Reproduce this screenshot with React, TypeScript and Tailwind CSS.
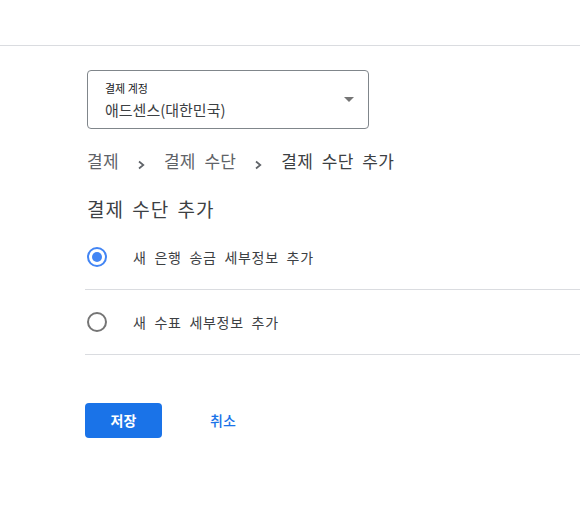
import { useState } from "react";

const font = { fontFamily: '"Noto Sans CJK KR", "Noto Sans", sans-serif' };

const Chevron = () => (
  <svg width="7" height="10" viewBox="0 0 7 10" className="ml-[19px] mr-[19px] mt-[7px]">
    <path d="M1 1.5 L5.3 5 L1 8.5" fill="none" stroke="#5f6368" strokeWidth="1.7" />
  </svg>
);

const Radio = ({ checked }: { checked: boolean }) => (
  <span
    className={
      checked
        ? "flex h-5 w-5 items-center justify-center rounded-full border-2 border-[#4285f4]"
        : "flex h-5 w-5 items-center justify-center rounded-full border-2 border-[#757575]"
    }
  >
    {checked && <span className="h-[10px] w-[10px] rounded-full bg-[#4285f4]" />}
  </span>
);

const options = ["새 은행 송금 세부정보 추가", "새 수표 세부정보 추가"];

export default function App() {
  const [selected, setSelected] = useState(0);

  return (
    <div className="min-h-[528px] bg-white text-[#3c4043]" style={font}>
      {/* top bar */}
      <div className="h-[46px] border-b border-[#dadce0]" />

      <div className="pl-[85px]">
        {/* account select */}
        <div className="ml-[2px] mt-[24px] flex h-[59px] w-[282px] items-center justify-between rounded-[4px] border border-[#80868b] pl-[17px] pr-[14px]">
          <div className="flex flex-col">
            <span className="text-[11px] leading-[14px] text-[#202124]">결제 계정</span>
            <span className="mt-[6px] text-[15px] leading-[18px] text-[#3c4043]">애드센스(대한민국)</span>
          </div>
          <svg width="10" height="5" viewBox="0 0 10 5">
            <path d="M0 0 L10 0 L5 5 Z" fill="#757575" />
          </svg>
        </div>

        {/* breadcrumb */}
        <div className="ml-[2px] mt-[20px] flex h-[24px] items-center text-[17px] tracking-[0.3px] text-[#5f6368] [word-spacing:4.5px]">
          <span>결제</span>
          <Chevron />
          <span>결제 수단</span>
          <Chevron />
          <span className="text-[#3c4043]">결제 수단 추가</span>
        </div>

        {/* heading */}
        <h1 className="ml-[2px] mt-[24px] text-[19px] leading-[24px] tracking-[1px] text-[#3c4043] [word-spacing:3px]">
          결제 수단 추가
        </h1>

        {/* options */}
        <div className="mt-[4px]">
          {options.map((label, i) => (
            <button
              key={label}
              type="button"
              onClick={() => setSelected(i)}
              className="flex h-[65px] w-full items-center border-b border-[#dadce0] pl-[2px] text-left"
            >
              <Radio checked={selected === i} />
              <span className="ml-[26px] text-[14px] tracking-[0.7px] text-[#3c4043] [word-spacing:4px]">{label}</span>
            </button>
          ))}
        </div>

        {/* actions */}
        <div className="mt-[48px] flex items-center">
          <button
            type="button"
            className="h-[35px] w-[77px] rounded-[4px] bg-[#1a73e8] text-[14px] font-bold text-white"
          >
            저장
          </button>
          <button type="button" className="ml-[48px] text-[14px] font-medium text-[#1a73e8]">
            취소
          </button>
        </div>
      </div>
    </div>
  );
}
